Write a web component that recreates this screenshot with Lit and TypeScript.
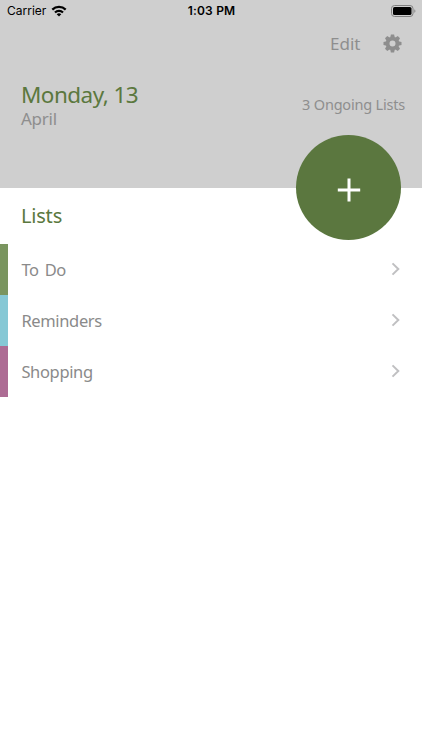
import { LitElement, html, css, svg } from "lit";
import { customElement, property, state } from "lit/decorators.js";
import { styleMap } from "lit/directives/style-map.js";

interface TaskList {
  name: string;
  color: string;
}

const GEAR_TEETH = [0, 45, 90, 135, 180, 225, 270, 315];

@customElement("status-bar")
class StatusBar extends LitElement {
  static styles = css`
    :host {
      display: grid;
      grid-template-columns: 1fr auto 1fr;
      align-items: center;
      height: 21px;
      padding: 0 6px 0 7px;
      box-sizing: border-box;
      font-family: Inter, "Liberation Sans", sans-serif;
      font-size: 12px;
      color: #000;
    }

    .carrier {
      display: flex;
      align-items: center;
      gap: 4.5px;
    }

    .time {
      font-weight: 600;
      letter-spacing: 0.2px;
    }

    .battery {
      justify-self: end;
    }

    svg {
      display: block;
    }
  `;

  render() {
    return html`
      <div class="carrier">
        <span>Carrier</span>
        <svg width="16" height="12" viewBox="0 0 16 12">
          <g fill="none" stroke="#000" stroke-width="2.2">
            <path d="M1.3 4.6a9.6 9.6 0 0 1 13.4 0" />
            <path d="M4 7.5a5.7 5.7 0 0 1 8 0" />
          </g>
          <path d="M8 11.6 5.7 9.3a3.3 3.3 0 0 1 4.6 0z" />
        </svg>
      </div>
      <span class="time">1:03 PM</span>
      <svg class="battery" width="25" height="12" viewBox="0 0 25 12">
        <rect x="0.5" y="0.5" width="21.5" height="11" rx="3" fill="none" stroke="#808080" />
        <rect x="2" y="2" width="18.5" height="8" rx="1.6" />
        <path d="M23.4 4.2c1.3.5 1.3 3.1 0 3.6z" fill="#808080" />
      </svg>
    `;
  }
}

@customElement("list-row")
class ListRow extends LitElement {
  @property() name = "";
  @property() color = "";

  static styles = css`
    :host {
      display: flex;
      align-items: stretch;
      height: 51px;
    }

    .stripe {
      width: 8.4px;
    }

    .content {
      flex: 1;
      display: flex;
      align-items: center;
      justify-content: space-between;
      padding: 0 22px 0 13px;
      font-size: 16.5px;
      letter-spacing: -0.35px;
      word-spacing: 2px;
      color: #8a8a8a;
    }

    svg {
      margin-bottom: 1px;
    }
  `;

  render() {
    return html`
      <div class="stripe" style=${styleMap({ backgroundColor: this.color })}></div>
      <div class="content">
        <span>${this.name}</span>
        <svg width="9" height="14" viewBox="0 0 9 14">
          <path d="M1.5 1.4 7.3 7 1.5 12.6" fill="none" stroke="#c0c0c2" stroke-width="2" />
        </svg>
      </div>
    `;
  }
}

@customElement("app-root")
class AppRoot extends LitElement {
  @state() lists: TaskList[] = [
    { name: "To Do", color: "#7a955f" },
    { name: "Reminders", color: "#86c8d5" },
    { name: "Shopping", color: "#ad6c94" },
  ];

  static styles = css`
    :host {
      display: block;
      height: 750px;
      background: #fff;
      font-family: "Noto Sans", sans-serif;
      color: #8e8e8e;
    }

    header {
      position: relative;
      height: 187.5px;
      background: #cfcfcf;
    }

    .toolbar {
      display: flex;
      justify-content: flex-end;
      align-items: center;
      gap: 22px;
      height: 44px;
      padding-right: 20.5px;
      font-size: 17px;
    }

    .summary {
      display: flex;
      justify-content: space-between;
      padding: 15px 17px 0 21px;
    }

    .day {
      font-size: 22.5px;
      line-height: 29px;
      letter-spacing: -0.55px;
      color: #5b783e;
    }

    .month {
      font-size: 17px;
      line-height: 20px;
      letter-spacing: -0.25px;
    }

    .count {
      padding-top: 14px;
      font-size: 14.5px;
      line-height: 20px;
      letter-spacing: -0.2px;
    }

    .add {
      position: absolute;
      right: 20.7px;
      bottom: -52.7px;
      width: 105.3px;
      height: 105.3px;
      padding: 4px 0 0;
      border: 0;
      border-radius: 50%;
      box-sizing: border-box;
      background: #5b773f;
      display: grid;
      place-items: center;
    }

    h2 {
      margin: 0;
      padding: 13px 21px 13.5px;
      font-size: 20px;
      line-height: 30px;
      font-weight: 400;
      letter-spacing: -0.2px;
      color: #5b783e;
    }
  `;

  render() {
    return html`
      <header>
        <status-bar></status-bar>
        <div class="toolbar">
          <span>Edit</span>
          <svg width="19" height="19" viewBox="-9.5 -9.5 19 19">
            <circle r="4.9" fill="none" stroke="#8e8e8e" stroke-width="3.8" />
            ${GEAR_TEETH.map(
              (angle) => svg`
                <path
                  d="M-2.3-6-1.6-9h3.2L2.3-6z"
                  fill="#8e8e8e"
                  transform="rotate(${angle})"
                />
              `,
            )}
          </svg>
        </div>
        <div class="summary">
          <div>
            <div class="day">Monday, 13</div>
            <div class="month">April</div>
          </div>
          <div class="count">${this.lists.length} Ongoing Lists</div>
        </div>
        <button class="add" aria-label="Add list">
          <svg width="24" height="24" viewBox="0 0 24 24">
            <path d="M12 0.5v23M0.8 12h22.4" stroke="#fff" stroke-width="3" />
          </svg>
        </button>
      </header>
      <main>
        <h2>Lists</h2>
        ${this.lists.map(
          (list) => html`<list-row .name=${list.name} .color=${list.color}></list-row>`,
        )}
      </main>
    `;
  }
}
